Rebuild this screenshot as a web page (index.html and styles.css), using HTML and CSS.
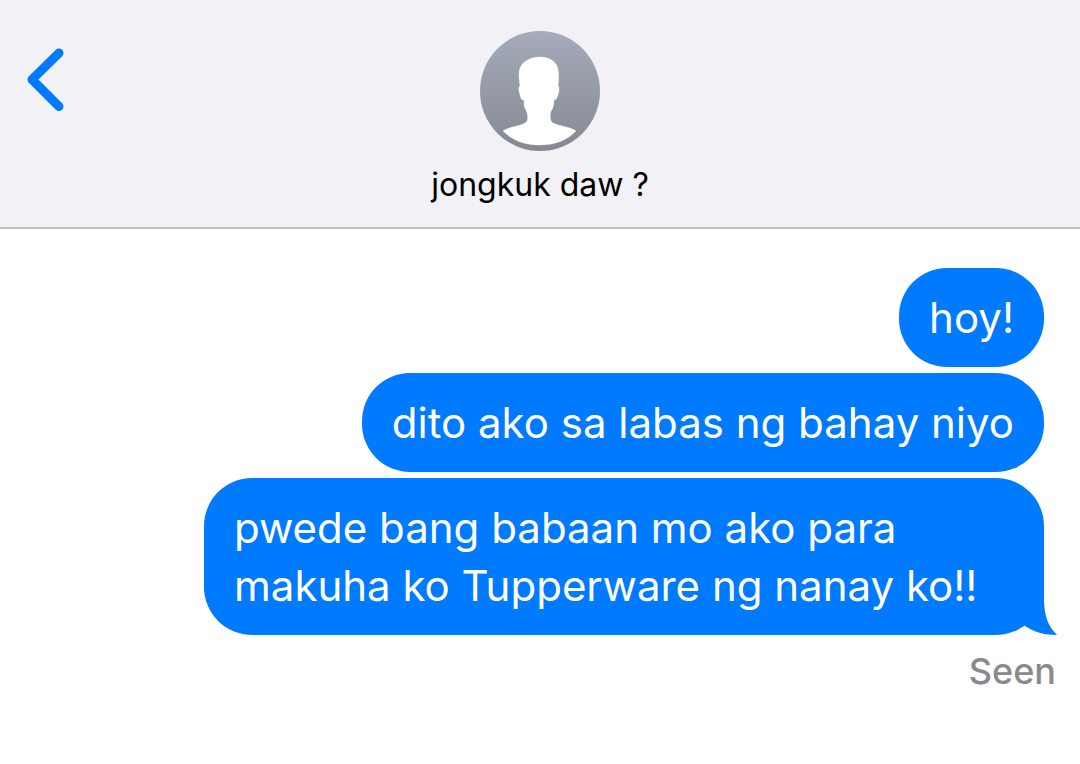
FILE: index.html
```html
<!DOCTYPE html>
<html lang="tl">
<head>
    <meta charset="UTF-8">
    <meta name="viewport" content="width=device-width, initial-scale=1.0">
    <title>jongkuk daw ?</title>
    <link rel="stylesheet" href="styles.css">
</head>
<body>
    <header class="chat-header">
        <button class="back-button" type="button" aria-label="Back">
            <svg width="44" height="66" viewBox="0 0 44 66"><path d="M35 6L8 32.5L35 59.5" fill="none" stroke="#007aff" stroke-width="9" stroke-linecap="round" stroke-linejoin="round"/></svg>
        </button>
        <div class="contact">
            <svg class="avatar" viewBox="0 0 120 120" aria-hidden="true">
                <defs>
                    <linearGradient id="avatarFill" x1="0" y1="0" x2="0" y2="1">
                        <stop offset="0" stop-color="#a5abb9"/>
                        <stop offset="1" stop-color="#858993"/>
                    </linearGradient>
                </defs>
                <circle cx="60" cy="60" r="60" fill="url(#avatarFill)"/>
                <path fill="#fff" stroke="#fff" stroke-opacity=".35" d="M60 26C69 26 75 30 77 35C79 40 79 48 78 55C80 56 79 60 78 64C77 67 76 69 74 69C74 73 73 78 71 80C70 83 70 88 71 90C74 95 90 95 96 100C86 110 74 114 60 114C45 114 33 110 23 100C30 95 44 95 47 90C48 88 48 83 46 79C44 77 44 72 44 69C41 69 41 67 40 64C39 60 38 56 40 55C39 48 38 40 41 35C44 30 51 26 60 26Z"/>
            </svg>
            <h1 class="contact-name">jongkuk daw ?</h1>
        </div>
    </header>

    <main class="messages">
        <div class="bubble">hoy!</div>
        <div class="bubble">dito ako sa labas ng bahay niyo</div>
        <div class="bubble bubble-last">
            pwede bang babaan mo ako para makuha ko Tupperware ng nanay ko!!
            <svg class="tail" width="40" height="60" viewBox="0 0 40 60" aria-hidden="true"><path d="M0 0H27V23C27 41 31 51 40 60C27 60 17 57 8 51L0 40Z" fill="#007aff"/></svg>
        </div>
        <div class="status">Seen</div>
    </main>
</body>
</html>
```

FILE: styles.css
```css
* {
    box-sizing: border-box;
}
body {
    margin: 0;
    background-color: #fff;
    font-family: Inter, "Liberation Sans", sans-serif;
}
.chat-header {
    display: grid;
    grid-template-columns: 64px 1fr 64px;
    align-items: start;
    padding: 31px 24px 20px;
    background-color: #f2f1f6;
    border-bottom: 2px solid #bcbcc1;
}
.back-button {
    display: flex;
    margin-top: 16px;
    padding: 0;
    border: none;
    background: none;
    cursor: pointer;
}
.contact {
    display: flex;
    flex-direction: column;
    align-items: center;
    gap: 12px;
}
.avatar {
    width: 120px;
    height: 120px;
}
.contact-name {
    margin: 0;
    font-size: 32px;
    font-weight: 400;
    line-height: 44px;
}
.messages {
    display: flex;
    flex-direction: column;
    align-items: flex-end;
    gap: 6px;
    padding: 39px 36px;
}
.bubble {
    max-width: 840px;
    padding: 21px 30px 20px;
    border-radius: 48px;
    background-color: #007aff;
    color: #fff;
    font-size: 42px;
    line-height: 58px;
}
.bubble-last {
    position: relative;
}
.tail {
    position: absolute;
    right: -13px;
    bottom: 0;
}
.status {
    margin: 6px -12px 0 0;
    color: #8a8a8e;
    font-size: 36px;
    font-weight: 500;
    line-height: 48px;
}
```
